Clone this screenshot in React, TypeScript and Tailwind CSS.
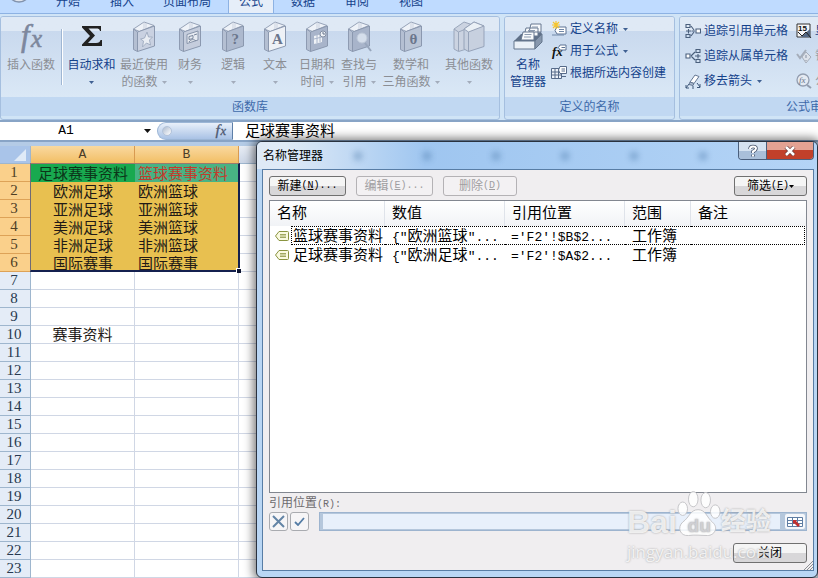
import React from "react";

const han = "font-['Liberation_Sans','Noto_Sans_CJK_SC',sans-serif]";
const mono = "font-['Liberation_Mono','Noto_Sans_CJK_SC',monospace]";
const serif = "font-['Liberation_Serif','Noto_Sans_CJK_SC',serif]";

function Book({ fill = "#c3cbdc", children }: { fill?: string; children?: React.ReactNode }) {
  return (
    <svg viewBox="0 0 28 32" className="mb-1 h-8 w-7 shrink-0">
      <path d="M3.500 8 14 1l10 3.500-14.500 6z" fill="#eef2f8" stroke="#97a3b8" />
      <path d="M14 1v7M16 2v5" stroke="#bcc6d6" strokeWidth=".7" />
      <path d="M3.500 8l4 3v19.500l-4-2z" fill="#b4bfd2" stroke="#8e9bb2" />
      <path d="M7.500 11 24.500 5v20l-17 5.500z" fill={fill} stroke="#8b98af" />
      {children}
    </svg>
  );
}

function Fx({ className, color = "#7d879d" }: { className: string; color?: string }) {
  return (
    <svg viewBox="0 0 30 32" className={`overflow-visible ${className}`}>
      <text x="5" y="23" fontFamily="Liberation Serif" fontStyle="italic" fontSize="31" fill={color} stroke={color} strokeWidth=".6">
        f
      </text>
      <text x="15" y="24" fontFamily="Liberation Serif" fontStyle="italic" fontSize="25" fill={color} stroke={color} strokeWidth=".6">
        x
      </text>
    </svg>
  );
}

function Arrow({ dim = false }: { dim?: boolean }) {
  return (
    <svg viewBox="0 0 5 3" className={dim ? "h-[3px] w-[5px] text-[#a3acbb]" : "h-[3px] w-[5px] text-[#3f6092]"}>
      <path d="M0 0h5L2.500 3z" fill="currentColor" />
    </svg>
  );
}

function Big({
  icon, first, second, width, active = false, arrow = true,
}: {
  icon: React.ReactNode; first: string; second?: string; width: string; active?: boolean; arrow?: boolean;
}) {
  return (
    <button
      type="button"
      className={`flex shrink-0 flex-col items-center whitespace-nowrap pt-1 text-xs leading-[17px] ${width} ${active ? "text-[#15428b]" : "text-[#8b8e94]"}`}
    >
      <span className="flex h-9 items-center">{icon}</span>
      <span>{first}</span>
      <span className="flex h-[17px] items-center gap-1">
        {second}
        {arrow && <Arrow dim={!active} />}
      </span>
    </button>
  );
}

function Small({ icon, label, arrow = false, dim = false }: { icon: React.ReactNode; label: string; arrow?: boolean; dim?: boolean }) {
  return (
    <button type="button" className={`flex items-center whitespace-nowrap text-xs leading-4 ${dim ? "text-[#9a9ea6]" : "text-[#15428b]"}`}>
      <svg viewBox="0 0 16 16" className="mr-[3px] size-4">{icon}</svg>
      {label}
      {arrow && <span className="ml-[5px]"><Arrow /></span>}
    </button>
  );
}

function Group({ title, width, children }: { title: string; width: string; children: React.ReactNode }) {
  return (
    <section className={`flex shrink-0 flex-col overflow-hidden rounded-[3px] border border-[#a5bfdf] ${width}`}>
      <div className="flex h-20 bg-linear-to-b from-[#dfe9f5] from-[17%] via-[#c9d9ee] via-[18%] to-[#dae8f6]">{children}</div>
      <h2 className="flex h-[19px] items-center justify-center bg-[#c1d8f2] text-xs text-[#3e6aaa]">{title}</h2>
    </section>
  );
}

const glyph = { fontFamily: "Liberation Serif", fontWeight: "bold", fontSize: 15, fill: "#6b768c" };

const people = "#4a5f7c";
const link = (
  <g fill="none" stroke={people} strokeWidth="1.100">
    <path d="M1 1.500h4v3H1zM1 11.500h4v3H1zM1 8h5M3.500 6v4.500M6 3l3 4M6 13l3-4M6.500 8H10" />
    <path d="M11 6h4.500v4H11z" fill="#fff" />
  </g>
);
const linkFrom = (
  <g fill="none" stroke={people} strokeWidth="1.100">
    <path d="M1 6h4v4H1z" fill="#fff" />
    <path d="M6 8l4-4M6 8l4 4M11 1.500h4v3h-4zM11 11.500h4v3h-4zM10 8h5.500M13 6v4.500" />
  </g>
);
const eraser = (
  <g>
    <path d="M5 9l5-7 4 1.500-5 7z" fill="#fff" stroke="#657894" />
    <path d="M5 9l4 1.500-1 2-4-1z" fill="#aebcd0" stroke="#657894" />
    <path d="M4 11l-3 4M1 12v3h3M8 13v3M12 10l3 4M15 11v3.500h-3" fill="none" stroke="#3d5678" />
  </g>
);
const newName = (
  <g>
    <path d="M6 6h9v7H6l-2-3.500z" fill="#fff" stroke="#5d7394" />
    <path d="M8 8.500h5M8 10.500h5M1 14h12" stroke="#7188a8" />
    <path d="M5 0v8M1 4h8M2 1l6 6M8 1L2 7" stroke="#f5c530" strokeWidth="1.200" />
  </g>
);
const useInFormula = (
  <g>
    <text x="1" y="13" fontFamily="Liberation Serif" fontStyle="italic" fontWeight="bold" fontSize="13" fill="#111">fx</text>
    <path d="M9 2h6v5H9L7.500 4.500z" fill="#fff" stroke="#5d7394" />
    <path d="M10.500 4.500H14" stroke="#5d7394" />
  </g>
);
const fromSelection = (
  <g>
    <path d="M.5 3.500h10v10H.5zM.5 7h10M.5 10h10M4 3.500v10M7.500 3.500v10" fill="#eef3fa" stroke="#566a88" />
    <path d="M9 1.500h6.500v7H9L7.500 5z" fill="#fff" stroke="#566a88" />
    <path d="M10.500 4H14M10.500 6H14M11 11.500h4" stroke="#566a88" />
  </g>
);
const show = (
  <g>
    <path d="M1 1h13v13H1z" fill="#f6f7f9" stroke="#333" />
    <path d="M5 14 14 6v8z" fill="#536783" />
    <text x="2" y="8" fontSize="8" fontFamily="Liberation Sans" fontWeight="bold" fill="#111">15</text>
    <path d="M2 9l4 4 4-4 5 6" fill="none" stroke="#222" />
  </g>
);
const check = (
  <g fill="none" stroke="#a5adba">
    <path d="M1 6l3 4 6-8" strokeWidth="2" />
    <path d="M10 4l5 5-5 6-4-6z" fill="#dde2ea" />
    <path d="M10 7v3M10 12v1" strokeWidth="1.500" />
  </g>
);
const evaluate = (
  <g>
    <circle cx="7" cy="7" r="6" fill="#e5eaf2" stroke="#939eb0" strokeWidth="1.300" />
    <text x="3" y="10" fontSize="9" fontFamily="Liberation Serif" fontStyle="italic" fill="#69758a">fx</text>
    <path d="M11 12l4 3" stroke="#939eb0" strokeWidth="2" />
  </g>
);
const cards = (
  <svg viewBox="0 0 30 30" className="mb-1 size-[30px]">
    <path d="M1 19l7-7h14l6-2 1 2-7 7z" fill="#5f7088" />
    <path d="M18 2h10v8H16zM13 6h12v8H11z" fill="#f8fafc" stroke="#66778f" strokeLinejoin="round" />
    <path d="M10 10h11v8H8z" fill="#f8fafc" stroke="#66778f" strokeLinejoin="round" />
    <path d="M19 5h6M15 8.500h7M11.500 12.500h7M11 15h7" stroke="#8c9bb0" />
    <path d="M1 19h21v8H1z" fill="#eaf0f7" stroke="#65768d" />
    <path d="M22 19l7-7v8l-7 7z" fill="#8797ad" stroke="#65768d" />
  </svg>
);

function Ribbon() {
  return (
    <div className="flex h-[107px] shrink-0 gap-1 border-t border-[#8db2e3] bg-[#d0e4f6] pt-[2px]">
      <Group title="函数库" width="w-[500px]">
        <Big width="w-[60px]" arrow={false} first="插入函数" icon={<Fx className="h-8 w-[30px]" />} />
        <span className="mt-3 h-14 w-[2px] border-l border-[#9fb6d3] bg-white" />
        <Big
          width="w-[57px]"
          active
          first="自动求和"
          icon={
            <svg viewBox="0 0 22 22" className="mb-[6px] size-[22px]">
              <path d="M1 1h19v5h-1c-.5-2-1.500-2.500-4-2.500H7.500L14 10.500 7 18h8c3 0 4-1 4.500-3H21v6H1v-1.500L9 11 1 2.500z" fill="#222" />
            </svg>
          }
        />
        <Big width="w-12" first="最近使用" second="的函数" icon={<Book fill="#c9d1e1"><path d="M17 11l1.500 5h4l-3 3 1 5-4-2-4 4 1-6-3-2 4-1z" fill="#e9edf3" stroke="#a3afc3" /></Book>} />
        <Big width="w-11" first="财务" icon={<Book fill="#c5cddd"><path d="M11 13.500 22 10v9l-11 3.500z" fill="#e7ebf2" stroke="#8794aa" /><path d="M13 15.500l4-1v3l-4 1zM18 14l3-1M13 21c2-3 5-3 7-1" fill="none" stroke="#79869c" /></Book>} />
        <Big width="w-[42px]" first="逻辑" icon={<Book fill="#adb9ce"><text x="12.500" y="23" {...glyph}>?</text></Book>} />
        <Big width="w-[42px]" first="文本" icon={<Book fill="#eef1f6"><text x="11" y="23" {...glyph}>A</text></Book>} />
        <Big width="w-[42px]" first="日期和" second="时间" icon={<Book fill="#a8b4ca"><path d="M11 15l8-2v8l-8 2z" fill="#f0f3f7" /><path d="M11 18l8-2M14 14v8M17 13v8" stroke="#a8b4ca" /><circle cx="20" cy="13" r="3" fill="#f0f3f7" stroke="#8490a5" /><path d="M20 11v2h2" fill="none" stroke="#67758c" /></Book>} />
        <Big width="w-[42px]" first="查找与" second="引用" icon={<Book fill="#a8b4ca"><circle cx="17" cy="17" r="5" fill="#d5deeb" stroke="#bdc8d8" /><path d="M20 22l6 8" stroke="#98a6bc" strokeWidth="2" /></Book>} />
        <Big width="w-[62px]" first="数学和" second="三角函数" icon={<Book fill="#b9c4d6"><text x="12.500" y="23" {...glyph}>θ</text></Book>} />
        <Big
          width="w-[54px]"
          first="其他函数"
          icon={
            <svg viewBox="0 0 34 32" className="mb-1 h-8 w-[34px]">
              <path d="M2 8 12 1l9 3v22L6.500 30.500 2 28z" fill="#cbd3e1" stroke="#99a6bb" />
              <path d="M2 8l4.500 3L21 5M6.500 11v19" fill="none" stroke="#99a6bb" />
              <path d="M12 8 22 1l10 4v20.500l-15.500 5L12 28z" fill="#c7d0df" stroke="#96a3b9" />
              <path d="M12 8 22 1l10 4-15.500 6z" fill="#eaf0f6" stroke="#96a3b9" />
              <path d="M16.500 11v19.500" stroke="#96a3b9" />
            </svg>
          }
        />
      </Group>
      <Group title="定义的名称" width="w-[171px]">
        <Big width="w-[46px]" active arrow={false} first="名称" second="管理器" icon={cards} />
        <div className="flex flex-col gap-[6px] pt-1">
          <Small icon={newName} label="定义名称" arrow />
          <Small icon={useInFormula} label="用于公式" arrow />
          <Small icon={fromSelection} label="根据所选内容创建" />
        </div>
      </Group>
      <Group title="公式审核" width="w-[262px]">
        <div className="flex w-[116px] shrink-0 flex-col gap-[9px] pt-[6px] pl-[5px]">
          <Small icon={link} label="追踪引用单元格" />
          <Small icon={linkFrom} label="追踪从属单元格" />
          <Small icon={eraser} label="移去箭头" arrow />
        </div>
        <div className="flex flex-col gap-[9px] pt-[6px]">
          <Small icon={show} label="显示公式" />
          <Small icon={check} label="错误检查" dim />
          <Small icon={evaluate} label="公式求值" dim />
        </div>
      </Group>
    </div>
  );
}

function Tabs() {
  const plain = "px-[15px] pb-[3px]";
  return (
    <nav className="flex h-[13px] shrink-0 items-end overflow-hidden bg-[#bfdbff] pl-2 text-xs leading-4 whitespace-nowrap text-[#15428b]">
      <svg viewBox="0 0 24 13" className="h-[13px] w-6 shrink-0">
        <circle cx="11" cy="-9" r="11" fill="#e0e5ed" stroke="#8192ac" strokeWidth="1.500" />
      </svg>
      <button type="button" className="ml-[9px] px-[15px] pb-[3px]">开始</button>
      <button type="button" className={plain}>插入</button>
      <button type="button" className="pr-[17px] pb-[3px] pl-[14px]">页面布局</button>
      <button type="button" className="mr-[2px] h-5 border-x border-[#8db2e3] bg-[#e6eef9] px-[10px] pb-[3px]">公式</button>
      <button type="button" className={plain}>数据</button>
      <button type="button" className={plain}>审阅</button>
      <button type="button" className={plain}>视图</button>
    </nav>
  );
}

function FormulaBar() {
  return (
    <div className="flex h-[22px] shrink-0 border-y-2 border-[#88a4c6] bg-white text-[15px] leading-[18px]">
      <div className="flex w-[157px] shrink-0 items-center pr-[6px]">
        <input aria-label="名称框" defaultValue="A1" className={`w-0 grow bg-transparent pr-3 text-center text-[13px] outline-none ${mono}`} />
        <svg viewBox="0 0 7 4" className="h-1 w-[7px]"><path d="M0 0h7L3.500 4z" fill="#111" /></svg>
      </div>
      <div className="flex w-[76px] shrink-0 items-center justify-between rounded-l-full border border-r-[#5d7fa8] border-[#9cb6d6] bg-linear-to-b from-[#e9f0fa] to-[#a9c2e5] px-1">
        <span className="size-[10px] rounded-full border border-[#b3c3da] bg-linear-to-br from-[#aebcd0] to-white" />
        <Fx className="h-4 w-[15px]" color="#4d5870" />
      </div>
      <input aria-label="编辑栏" defaultValue="足球赛事资料" className="w-0 grow bg-transparent pl-3 outline-none" />
    </div>
  );
}

const cells: string[][] = [
  ["足球赛事资料", "篮球赛事资料"],
  ["欧洲足球", "欧洲篮球"],
  ["亚洲足球", "亚洲篮球"],
  ["美洲足球", "美洲篮球"],
  ["非洲足球", "非洲篮球"],
  ["国际赛事", "国际赛事"],
  [], [], [],
  ["赛事资料"],
  [], [], [], [], [], [], [], [], [], [], [], [], [],
];

function Sheet() {
  const head = "border-r border-b border-[#d89a51] bg-linear-to-b from-[#f9d99f] to-[#f2be63] font-normal";
  return (
    <div className="relative min-h-0 grow overflow-hidden bg-white">
      <table className="w-full table-fixed border-separate border-spacing-0 text-[15px] leading-[17px] text-[#221a16]">
        <colgroup>
          <col className="w-[31px]" />
          <col className="w-[104px]" />
          <col className="w-[104px]" />
          <col />
        </colgroup>
        <thead>
          <tr className={`h-[18px] text-[13px] text-[#4a3c28] ${mono}`}>
            <th className="border-r border-b border-[#9eb6ce] bg-[#a9c4e9]">
              <svg viewBox="0 0 12 12" className="mr-1 ml-auto size-3"><path d="M12 0v12H0z" fill="#dfeaf7" /></svg>
            </th>
            <th className={`p-0 ${head}`}>A</th>
            <th className={`p-0 ${head}`}>B</th>
            <th className="border-r border-b border-[#9eb6ce] bg-linear-to-b from-[#e8edf5] to-[#ccd6e6] p-0" />
          </tr>
        </thead>
        <tbody>
          {cells.map((row, i) => {
            const picked = i < 6;
            return (
              <tr key={i} className="h-[18px] whitespace-nowrap">
                <th
                  className={`border-r border-b p-0 pr-[2px] font-normal ${serif} ${picked ? "border-[#dda257] bg-[#fad08b] text-[#4f3e25]" : "border-[#9eb6ce] bg-[#e4ecf7] text-[#27394f]"}`}
                >
                  {i + 1}
                </th>
                <td
                  className={`p-0 text-center ${i === 0 ? "bg-[#18a94f] text-[#0c3519]" : picked ? "bg-[#e8c050]" : "border-r border-b border-[#d0d7e5]"}`}
                >
                  {row[0]}
                </td>
                <td
                  className={`p-0 pl-[3px] ${i === 0 ? "bg-[#48b384] text-[#c33a2c]" : picked ? "bg-[#e8c050]" : "border-r border-b border-[#d0d7e5]"}`}
                >
                  {row[1]}
                </td>
                <td className="border-r border-b border-[#d0d7e5] p-0" />
              </tr>
            );
          })}
        </tbody>
      </table>
      <div className="pointer-events-none absolute top-[17px] left-[30px] h-[109px] w-[210px] border-t border-r-2 border-b-2 border-l border-t-[#9b7a6e] border-r-[#14204f] border-b-[#14204f] border-l-[#6f6a75]">
        <span className="absolute -right-[3px] -bottom-[3px] size-[5px] border-t border-l border-white bg-[#0c1330]" />
      </div>
    </div>
  );
}

function PushButton({ label, hot, tail, width, disabled = false }: { label: string; hot?: string; tail?: React.ReactNode; width: string; disabled?: boolean }) {
  return (
    <button
      type="button"
      disabled={disabled}
      className={`flex h-5 items-center justify-center rounded-[3px] border text-xs ${width} ${disabled ? "border-[#b4b2b5] bg-[#f3f1f3] text-[#a09ea1]" : "border-[#707070] bg-linear-to-b from-[#f5f5f5] from-50% to-[#d8d7d9] to-50% text-black"}`}
    >
      {label}
      {hot && <span className={`text-[10px] ${mono}`}>(<u>{hot}</u>)</span>}
      {tail}
    </button>
  );
}

function NameRow({ name, city, cell, focused = false }: { name: string; city: string; cell: string; focused?: boolean }) {
  const small = `text-[13px] leading-none ${mono}`;
  const line = focused ? "border-dotted border-black" : "border-transparent";
  return (
    <tr className="h-[19px] leading-[17px]">
      <td className="p-0">
        <div className="flex items-center pl-[5px]">
          <svg viewBox="0 0 14 10" className="h-[10px] w-[14px] shrink-0">
            <path d="M4 .5h8.500q1 0 1 1v7q0 1-1 1H4L.5 5z" fill="#fafae0" stroke="#8a9440" />
            <path d="M5 3.500h6M5 5h6M5 6.500h6" stroke="#8a9440" strokeWidth=".8" />
          </svg>
          <span className={`ml-[2px] h-[19px] grow border-y border-l pl-px ${line}`}>{name}</span>
        </div>
      </td>
      <td className="p-0">
        <div className={`h-[19px] border-y pl-[7px] ${line}`}>
          <span className={small}>{"{\""}</span>{city}<span className={small}>{"\"..."}</span>
        </div>
      </td>
      <td className="p-0">
        <div className={`h-[19px] border-y pl-[6px] ${line}`}>
          <span className={small}>{cell}</span>
        </div>
      </td>
      <td className="p-0">
        <div className={`h-[19px] border-y pl-[7px] ${line}`}>工作簿</div>
      </td>
      <td className="p-0 pr-px">
        <div className={`h-[19px] border-y border-r ${line}`} />
      </td>
    </tr>
  );
}

function NameManager() {
  const col = "border-r border-[#dfe3ea] p-0 pl-[7px] text-left font-normal";
  const dots = <span className={`text-[10px] ${mono}`}>...</span>;
  return (
    <div
      role="dialog"
      aria-label="名称管理器"
      className="absolute top-[141px] right-0 bottom-0 left-[256px] flex flex-col overflow-hidden rounded-md border border-[#29323f] bg-[#b9d6f4] pb-[6px] shadow-[0_0_10px_3px_rgba(0,0,0,0.5)]"
    >
      <header className="flex h-[27px] shrink-0 items-start justify-between bg-linear-to-r from-[#dfeaf6] from-5% via-[#9fc6f0] via-30% to-[#b4d4f6] pr-[3px] pl-[6px]">
        <span className="flex h-[27px] grow items-center text-xs text-black">
          名称管理器
          <span className="flex grow justify-around">
            {[0, 1, 2, 3, 4, 5].map((n) => (
              <span key={n} className="size-2 rounded-full bg-[#39699b] opacity-45 blur-[3px]" />
            ))}
          </span>
        </span>
        <div className="flex h-[18px] shrink-0 overflow-hidden rounded-b border border-t-0 border-[#4a5f7c]">
          <button type="button" aria-label="帮助" className="flex w-7 items-center justify-center border-r border-[#4a5f7c] bg-linear-to-b from-[#d5e2f0] from-50% to-[#a9bfd9] to-50%">
            <svg viewBox="0 0 12 14" className="h-[14px] w-3">
              <path d="M3 5q0-2.500 3-2.500t3 2q0 1.500-3 3V9M6 10.500v2" fill="none" stroke="#45536a" strokeWidth="3.500" />
              <path d="M3 5q0-2.500 3-2.500t3 2q0 1.500-3 3V9M6 10.500v2" fill="none" stroke="#fff" strokeWidth="2" />
            </svg>
          </button>
          <button type="button" aria-label="关闭窗口" className="flex w-[46px] items-center justify-center bg-linear-to-b from-[#e3a293] from-45% to-[#c1402a] to-50%">
            <svg viewBox="0 0 12 10" className="h-[10px] w-3">
              <path d="M2 1l8 8M10 1L2 9" stroke="#6d3a38" strokeWidth="4" />
              <path d="M2 1l8 8M10 1L2 9" stroke="#fff" strokeWidth="2.500" />
            </svg>
          </button>
        </div>
      </header>
      <div className="relative mr-[3px] ml-[5px] flex min-h-0 grow flex-col border border-[#587da5] bg-[#f0eef0] px-[6px] pt-[6px] pb-[7px]">
        <div className="flex shrink-0 items-center gap-[10px]">
          <PushButton label="新建" hot="N" tail={dots} width="w-[77px]" />
          <PushButton label="编辑" hot="E" tail={dots} width="w-[77px]" disabled />
          <PushButton label="删除" hot="D" width="w-[74px]" disabled />
          <span className="grow" />
          <PushButton label="筛选" hot="F" tail={<svg viewBox="0 0 5 3" className="h-[3px] w-[5px]"><path d="M0 0h5L2.500 3z" /></svg>} width="w-[73px]" />
        </div>
        <div className="mt-1 min-h-0 grow border border-[#828790] bg-white">
          <table className="w-full table-fixed border-separate border-spacing-0 text-[15px] whitespace-nowrap text-black">
            <colgroup>
              <col className="w-[115px]" />
              <col className="w-[120px]" />
              <col className="w-[120px]" />
              <col className="w-[66px]" />
              <col />
            </colgroup>
            <thead>
              <tr className="h-[25px] bg-linear-to-b from-white to-[#f1f3f6]">
                <th className={col}>名称</th>
                <th className={col}>数值</th>
                <th className={col}>引用位置</th>
                <th className={col}>范围</th>
                <th className="p-0 pl-[7px] text-left font-normal">备注</th>
              </tr>
            </thead>
            <tbody>
              <NameRow name="篮球赛事资料" city="欧洲篮球" cell="='F2'!$B$2..." focused />
              <NameRow name="足球赛事资料" city="欧洲足球" cell="='F2'!$A$2..." />
            </tbody>
          </table>
        </div>
        <label htmlFor="refers-to" className="mt-[2px] h-4 shrink-0 text-xs leading-4 text-[#6d6b6e]">
          引用位置<span className={`text-[10px] ${mono}`}>(R):</span>
        </label>
        <div className="mt-px flex h-[19px] shrink-0">
          <button type="button" aria-label="取消" className="mr-[2px] flex w-[19px] items-center justify-center rounded-[3px] border border-[#a9abb0] bg-[#f6f5f7]">
            <svg viewBox="0 0 13 13" className="size-[13px]"><path d="M1 1l11 11M12 1L1 12" stroke="#6384a6" strokeWidth="2" /></svg>
          </button>
          <button type="button" aria-label="输入" className="mr-[10px] flex w-[19px] items-center justify-center rounded-[3px] border border-[#a9abb0] bg-[#f6f5f7]">
            <svg viewBox="0 0 11 9" className="h-[9px] w-[11px]"><path d="M1 5l3 3 6-7" fill="none" stroke="#557da6" strokeWidth="1.800" /></svg>
          </button>
          <div className="flex grow border border-[#9db4cf] bg-[#b5c7dc] p-px pl-[3px]">
            <input id="refers-to" disabled className="w-0 grow bg-[#e8f0fb]" />
            <button type="button" aria-label="选取区域" className="ml-[5px] flex w-5 items-center justify-center rounded-[2px] bg-[#f5f7fb]">
              <svg viewBox="0 0 16 12" className="h-3 w-4">
                <path d="M.5 1.500h15v9H.5zM.5 4.500h15M.5 7.500h15M5.500 1.500v9M10.500 1.500v9" fill="#fff" stroke="#5e7da3" />
                <path d="M6 4h4l-1 1 4 4-2 2-4-4-1 1z" fill="#c12e2e" />
              </svg>
            </button>
          </div>
        </div>
        <div className="mt-3 flex h-5 shrink-0 justify-end">
          <PushButton label="关闭" width="w-[74px]" />
        </div>
        <svg viewBox="0 0 10 10" className="absolute right-0 bottom-0 size-[10px]">
          <path d="M1 10l9-9M4 10l6-6M7 10l3-3" stroke="#8c8d92" />
        </svg>
        <div aria-hidden="true" className="pointer-events-none absolute right-[42px] bottom-1 flex h-[76px] w-[144px] flex-col text-white/80 [text-shadow:0_0_2px_#999]">
          <div className="flex h-[50px] items-end font-bold">
            <span className="text-[32px] leading-[36px]">Bai</span>
            <svg viewBox="0 0 46 48" className="mb-[3px] h-[47px] w-[44px] shrink-0">
              <g fill="#fff" stroke="#c3c3c6" fillOpacity=".85">
                <ellipse cx="6" cy="19" rx="5" ry="7" />
                <ellipse cx="17" cy="9" rx="5" ry="8" />
                <ellipse cx="30" cy="10" rx="5" ry="8" />
                <ellipse cx="40" cy="22" rx="5" ry="7" />
                <path d="M22 20c8 0 9 8 15 13 7 6 2 14-5 14-6 0-14-1-20 0C3 48 0 38 6 33c7-5 8-13 16-13z" />
              </g>
              <text x="11" y="43" fontFamily="Liberation Sans" fontWeight="bold" fontSize="20" fill="#cfcfd3">du</text>
            </svg>
            <span className="text-[25px] leading-[38px] whitespace-nowrap">经验</span>
          </div>
          <span className="font-['Open_Sans',sans-serif] text-[17px] leading-6">jingyan.baidu.com</span>
        </div>
      </div>
    </div>
  );
}

export default function App() {
  return (
    <main className={`relative flex h-screen w-full flex-col overflow-hidden bg-[#bdd3ee] ${han}`}>
      <Tabs />
      <Ribbon />
      <FormulaBar />
      <div className="h-1 shrink-0 bg-[#b4cbe6]" />
      <Sheet />
      <NameManager />
    </main>
  );
}
